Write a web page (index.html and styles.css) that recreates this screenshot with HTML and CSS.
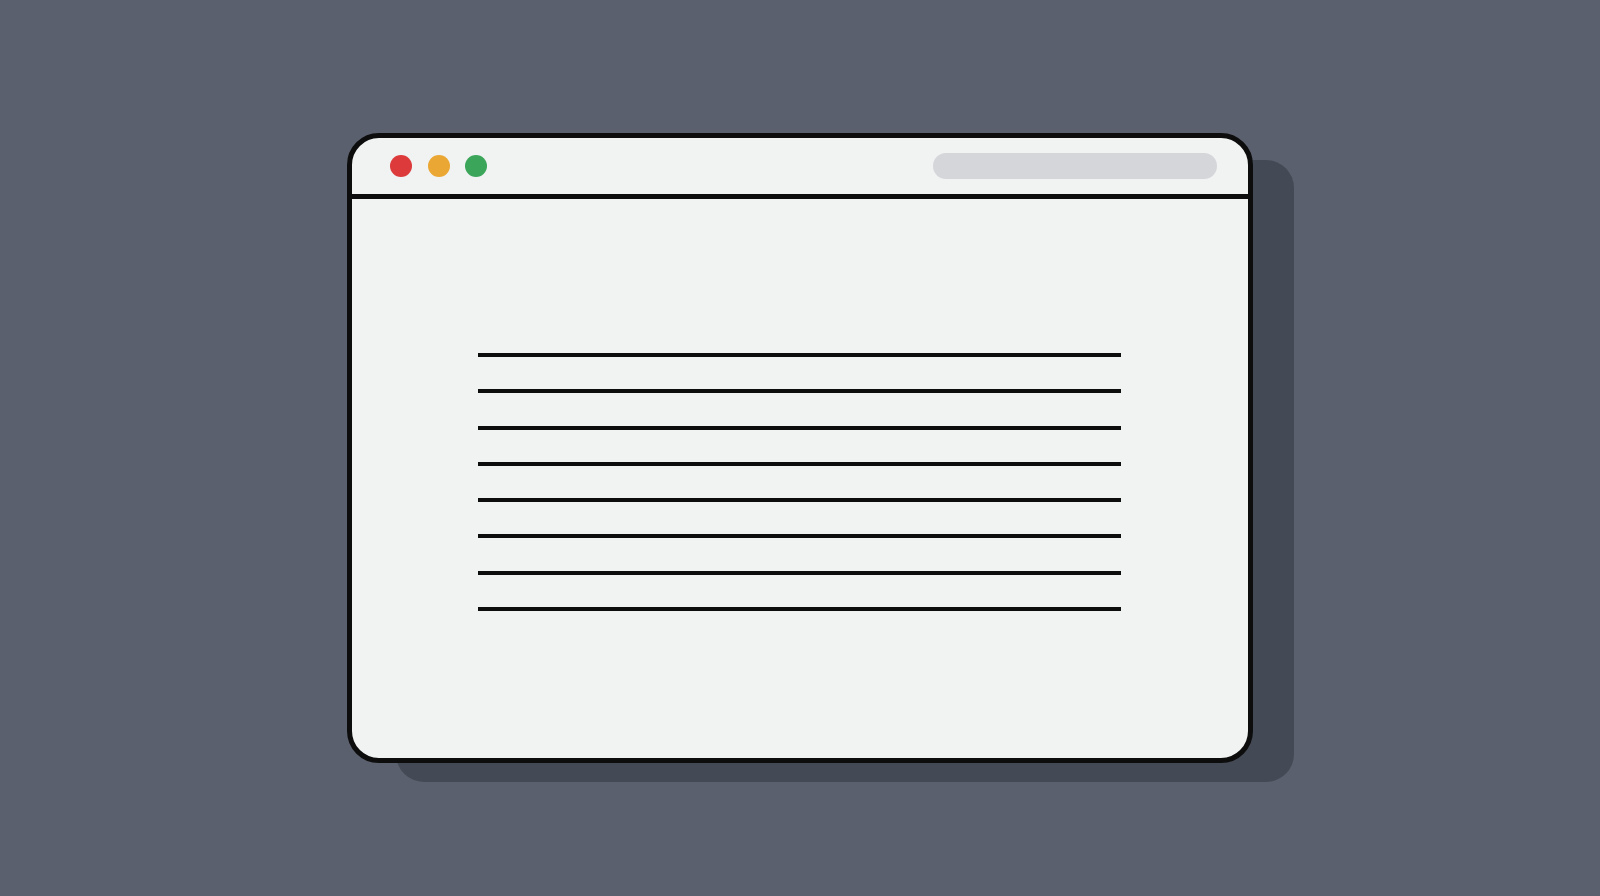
FILE: index.html
```html
<!DOCTYPE html>
<html>
<head>
<meta charset="utf-8">
<link rel="stylesheet" href="styles.css">
</head>
<body>
<div class="stage">
  <div class="window">
    <div class="titlebar">
      <span class="dot red"></span>
      <span class="dot yellow"></span>
      <span class="dot green"></span>
      <span class="address"></span>
    </div>
    <div class="content">
      <div class="lines">
        <div class="line"></div>
        <div class="line"></div>
        <div class="line"></div>
        <div class="line"></div>
        <div class="line"></div>
        <div class="line"></div>
        <div class="line"></div>
        <div class="line"></div>
      </div>
    </div>
  </div>
</div>
</body>
</html>
```
FILE: styles.css
```css
html, body {
  margin: 0;
  padding: 0;
  background: #5a606d;
  width: 1600px;
  height: 896px;
  overflow: hidden;
}
.stage {
  padding: 133px 0 0 347px;
}
.window {
  box-sizing: border-box;
  width: 906px;
  height: 630px;
  border: 5px solid #0d0d0d;
  border-radius: 32px;
  background: #f1f2f2;
  box-shadow: 45px 23px 0 -4px #444a55;
  display: flex;
  flex-direction: column;
}
.titlebar {
  height: 56px;
  border-bottom: 5px solid #0d0d0d;
  display: flex;
  align-items: center;
  padding: 0 31.5px 0 38px;
}
.dot {
  width: 22px;
  height: 22px;
  border-radius: 50%;
  margin-right: 15.5px;
}
.red { background: #dc3a3b; }
.yellow { background: #eaa733; }
.green { background: #3ba55a; }
.address {
  margin-left: auto;
  width: 284px;
  height: 26px;
  border-radius: 13px;
  background: #d4d6da;
}
.content {
  flex: 1;
  padding-top: 154px;
  display: flex;
  justify-content: flex-start;
  padding-left: 126px;
}
.lines {
  display: flex;
  flex-direction: column;
  gap: 32.3px;
  width: 643px;
}
.line {
  height: 4px;
  background: #0d0d0d;
}
```
